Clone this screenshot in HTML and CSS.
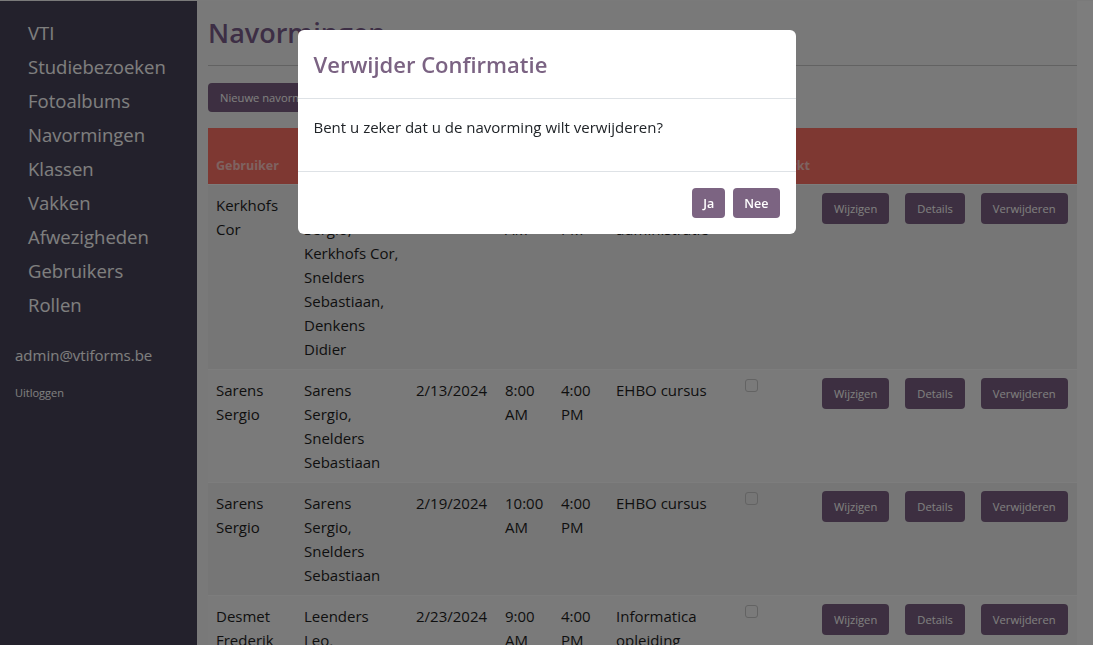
FILE: index.html
```html
<!DOCTYPE html>
<html lang="nl">
<head>
<meta charset="utf-8">
<title>Navormingen</title>
<link rel="stylesheet" href="styles.css">
</head>
<body>
<div class="app">
  <aside class="sidebar">
    <nav class="nav">
      <a href="#">VTI</a>
      <a href="#">Studiebezoeken</a>
      <a href="#">Fotoalbums</a>
      <a href="#">Navormingen</a>
      <a href="#">Klassen</a>
      <a href="#">Vakken</a>
      <a href="#">Afwezigheden</a>
      <a href="#">Gebruikers</a>
      <a href="#">Rollen</a>
    </nav>
    <div class="user">admin@vtiforms.be</div>
    <a class="logout" href="#">Uitloggen</a>
  </aside>
  <main class="main">
    <h1 class="title">Navormingen</h1>
    <hr class="rule">
    <a class="btn btn-new" href="#">Nieuwe navorming</a>
    <table class="table">
      <colgroup>
        <col style="width:88px"><col style="width:112px"><col style="width:89px"><col style="width:56px"><col style="width:55px"><col style="width:129px"><col style="width:77px"><col style="width:263px">
      </colgroup>
      <thead>
        <tr>
          <th>Gebruiker</th><th>Deelnemers</th><th>Datum</th><th>Begin uur</th><th>Eind uur</th><th>Onderwerp</th><th>Afgewerkt</th><th></th>
        </tr>
      </thead>
      <tbody>
        <tr class="odd">
          <td>Kerkhofs Cor</td>
          <td>Sarens Sergio, Kerkhofs Cor, Snelders Sebastiaan, Denkens Didier</td>
          <td>2/5/2024</td>
          <td>9:00 AM</td>
          <td>4:00 PM</td>
          <td>Smartschool administratie</td>
          <td><span class="check"></span></td>
          <td><div class="actions"><a class="btn" href="#">Wijzigen</a><a class="btn" href="#">Details</a><a class="btn" href="#">Verwijderen</a></div></td>
        </tr>
        <tr>
          <td>Sarens Sergio</td>
          <td>Sarens Sergio, Snelders Sebastiaan</td>
          <td>2/13/2024</td>
          <td>8:00 AM</td>
          <td>4:00 PM</td>
          <td>EHBO cursus</td>
          <td><span class="check"></span></td>
          <td><div class="actions"><a class="btn" href="#">Wijzigen</a><a class="btn" href="#">Details</a><a class="btn" href="#">Verwijderen</a></div></td>
        </tr>
        <tr class="odd">
          <td>Sarens Sergio</td>
          <td>Sarens Sergio, Snelders Sebastiaan</td>
          <td>2/19/2024</td>
          <td>10:00 AM</td>
          <td>4:00 PM</td>
          <td>EHBO cursus</td>
          <td><span class="check"></span></td>
          <td><div class="actions"><a class="btn" href="#">Wijzigen</a><a class="btn" href="#">Details</a><a class="btn" href="#">Verwijderen</a></div></td>
        </tr>
        <tr>
          <td>Desmet Frederik</td>
          <td>Leenders Leo, Vandenberghe Jan</td>
          <td>2/23/2024</td>
          <td>9:00 AM</td>
          <td>4:00 PM</td>
          <td>Informatica opleiding</td>
          <td><span class="check"></span></td>
          <td><div class="actions"><a class="btn" href="#">Wijzigen</a><a class="btn" href="#">Details</a><a class="btn" href="#">Verwijderen</a></div></td>
        </tr>
      </tbody>
    </table>
  </main>
  <div class="scrolltrack"></div>
</div>

<div class="backdrop"></div>
<div class="modal-wrap">
  <div class="modal">
    <div class="modal-header">
      <h4 class="modal-title">Verwijder Confirmatie</h4>
    </div>
    <div class="modal-body">
      <p>Bent u zeker dat u de navorming wilt verwijderen?</p>
    </div>
    <div class="modal-footer">
      <button class="mbtn" type="button">Ja</button>
      <button class="mbtn" type="button">Nee</button>
    </div>
  </div>
</div>
</body>
</html>
```

FILE: styles.css
```css
html, body {
  margin: 0;
  padding: 0;
  height: 100%;
  overflow: hidden;
}
body {
  font-family: "Open Sans", "Noto Sans", sans-serif;
  font-size: 15px;
  line-height: 24px;
  color: #1e1e1e;
  background: #f2f2f2;
}
a { text-decoration: none; }

.app {
  display: flex;
  height: 100%;
  border-top: 1px solid #f4f4f4;
  box-sizing: border-box;
}

/* sidebar */
.sidebar {
  width: 197px;
  flex: 0 0 197px;
  background: #474358;
  box-sizing: border-box;
  padding-top: 15px;
}
.nav {
  display: flex;
  flex-direction: column;
  padding-left: 28px;
}
.nav a {
  color: #ffffff;
  font-size: 18.5px;
  line-height: 34px;
  height: 34px;
}
.user {
  color: #ffffff;
  font-size: 15px;
  line-height: 24px;
  margin-top: 21px;
  padding-left: 15px;
}
.logout {
  display: block;
  color: #ffffff;
  font-size: 11px;
  line-height: 18px;
  margin-top: 17px;
  padding-left: 15px;
}

/* main */
.main {
  flex: 1;
  padding-left: 11px;
  min-width: 0;
}
.scrolltrack {
  flex: 0 0 16px;
  background: #fafafa;
}
.title {
  margin: 16px 0 0;
  font-size: 27px;
  line-height: 32px;
  font-weight: 600;
  color: #7a5d8b;
}
.rule {
  margin: 16px 0 0;
  border: 0;
  border-top: 1px solid #c4c4c4;
  height: 0;
}
.btn {
  display: inline-flex;
  align-items: center;
  height: 31px;
  padding: 0 12px;
  border-radius: 4px;
  background: #7b5f82;
  color: #ffffff;
  font-size: 11.2px;
  white-space: nowrap;
  box-sizing: border-box;
}
.btn-new {
  margin-top: 17px;
  height: 29px;
}

.table {
  margin-top: 16px;
  width: 869px;
  table-layout: fixed;
  border-collapse: collapse;
}
.table th {
  background: #fc7064;
  color: rgba(255, 255, 255, 0.62);
  font-size: 12.5px;
  font-weight: 700;
  line-height: 20px;
  text-align: left;
  vertical-align: bottom;
  padding: 8px;
}
.table td {
  padding: 8px;
  vertical-align: top;
  border-top: 1px solid #fbfbfb;
  background: #f4f4f4;
}
.table tr.odd td {
  background: #ececec;
}
.check {
  display: block;
  width: 11px;
  height: 11px;
  margin-top: 1px;
  border: 1px solid #c6c6c6;
  border-radius: 3px;
}
.actions {
  display: flex;
  gap: 16px;
}

/* modal */
.backdrop {
  position: fixed;
  inset: 0;
  background: rgba(0, 0, 0, 0.5);
}
.modal-wrap {
  position: fixed;
  inset: 0;
  display: flex;
  justify-content: center;
  align-items: flex-start;
  padding-top: 30px;
}
.modal {
  width: 498px;
  background: #ffffff;
  border-radius: 6px;
  overflow: hidden;
}
.modal-header {
  padding: 16px;
  border-bottom: 1px solid #dee2e6;
}
.modal-title {
  margin: 0;
  font-size: 22px;
  line-height: 36px;
  font-weight: 600;
  color: #7b6383;
}
.modal-body {
  padding: 16px;
  border-bottom: 1px solid #dee2e6;
}
.modal-body p {
  margin: 0 0 16px;
  color: #212529;
}
.modal-footer {
  display: flex;
  justify-content: flex-end;
  padding: 12px;
}
.mbtn {
  margin: 4px;
  height: 30px;
  padding: 0 11px;
  border: 0;
  border-radius: 4px;
  background: #7c6482;
  color: #ffffff;
  font-family: "Open Sans", "Noto Sans", sans-serif;
  font-size: 12.5px;
  font-weight: 600;
}
```
